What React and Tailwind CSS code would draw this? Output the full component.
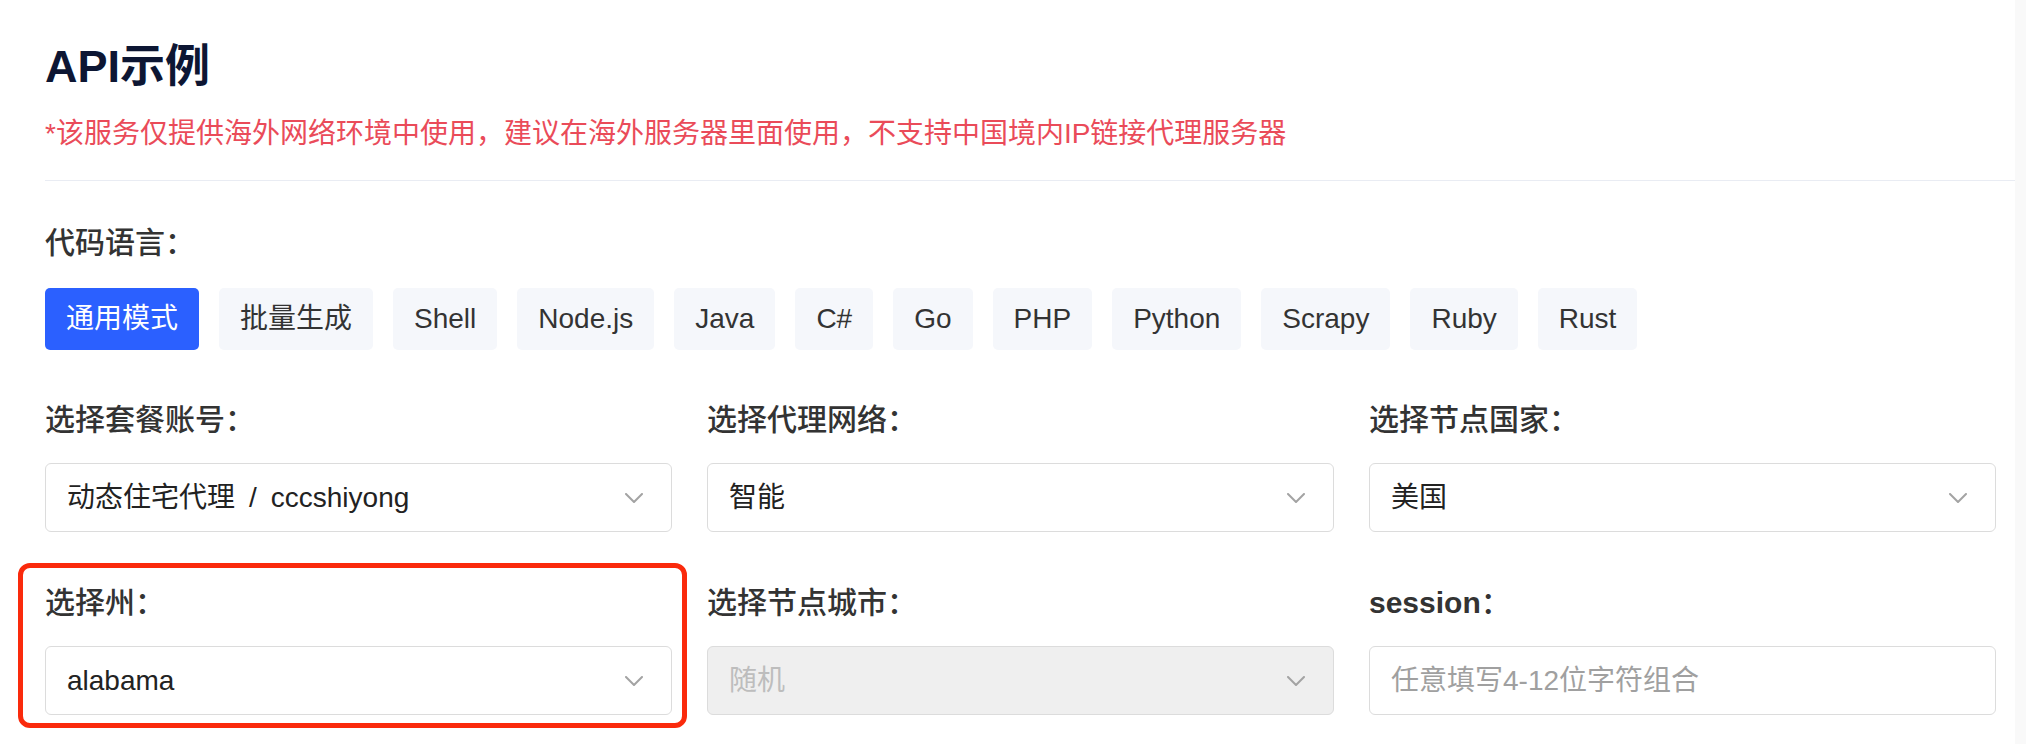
const tabs = ['通用模式', '批量生成', 'Shell', 'Node.js', 'Java', 'C#', 'Go', 'PHP', 'Python', 'Scrapy', 'Ruby', 'Rust'];

function Chevron() {
  return (
    <svg width="18" height="10" viewBox="0 0 18 10" fill="none">
      <path d="M1 1l8 8 8-8" stroke="#a3a3a3" strokeWidth="2" strokeLinecap="round" strokeLinejoin="round" />
    </svg>
  );
}

function Field({ label, children }) {
  return (
    <div className="flex flex-col">
      <div className="text-[30px] font-medium leading-[40px] text-[#333]">{label}</div>
      <div className="mt-[23px]">{children}</div>
    </div>
  );
}

function Select({ children, disabled }) {
  return (
    <div
      className={`flex h-[69px] items-center justify-between rounded-[6px] border border-[#dcdcdc] pl-[21px] pr-[28px] text-[28px] ${
        disabled ? 'bg-[#efefef] text-[#bdbdbd]' : 'bg-white text-[#222]'
      }`}
    >
      <span>{children}</span>
      <Chevron />
    </div>
  );
}

export default function App() {
  return (
    <div className="flex min-h-screen bg-white font-['Liberation_Sans','Noto_Sans_CJK_SC',sans-serif]">
      <div className="flex-1 pl-[45px] pr-[19px] pt-[45px] pb-[29px]">
        <h1 className="text-[45px] font-bold leading-[44px] text-[#0d1633]">API示例</h1>
        <p className="mt-[25px] text-[28px] leading-[40px] text-[#ea4b59]">
          *该服务仅提供海外网络环境中使用，建议在海外服务器里面使用，不支持中国境内IP链接代理服务器
        </p>
        <div className="mt-[26px] -mr-[19px] border-t border-[#e9ecf3]" />

        <div className="mt-[42px] text-[30px] font-medium leading-[40px] text-[#333]">代码语言：</div>
        <div className="mt-[25px] flex gap-[20px]">
          {tabs.map((t, i) => (
            <button
              key={t}
              className={`h-[62px] rounded-[5px] px-[21px] text-[28px] ${
                i === 0 ? 'bg-[#2b60ff] text-white' : 'bg-[#f5f7fb] text-[#333]'
              }`}
            >
              {t}
            </button>
          ))}
        </div>

        <div className="mt-[50px] grid grid-cols-3 gap-x-[35px] gap-y-[51px]">
          <Field label="选择套餐账号：">
            <Select>
              动态住宅代理<span className="mx-[14px]">/</span>cccshiyong
            </Select>
          </Field>
          <Field label="选择代理网络：">
            <Select>智能</Select>
          </Field>
          <Field label="选择节点国家：">
            <Select>美国</Select>
          </Field>
          <div className="relative">
            <Field label="选择州：">
              <Select>alabama</Select>
            </Field>
            <div className="pointer-events-none absolute -left-[27px] -right-[15px] -top-[20px] -bottom-[13px] rounded-[12px] border-[5px] border-[#fa2a0c]" />
          </div>
          <Field label="选择节点城市：">
            <Select disabled>随机</Select>
          </Field>
          <Field label={<><span className="font-semibold">session</span>：</>}>
            <input
              readOnly
              placeholder="任意填写4-12位字符组合"
              className="h-[69px] w-full rounded-[6px] border border-[#dcdcdc] bg-white px-[21px] text-[28px] text-[#222] outline-none placeholder:text-[#a0a0a0]"
            />
          </Field>
        </div>
      </div>
      <div className="w-[11px] shrink-0 bg-[#f9f9f9]" />
    </div>
  );
}
